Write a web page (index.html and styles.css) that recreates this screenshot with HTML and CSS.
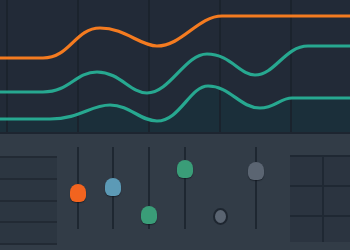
FILE: index.html
```html
<!DOCTYPE html>
<html>
<head>
<meta charset="utf-8">
<link rel="stylesheet" href="styles.css">
</head>
<body>
<div class="app">
  <div class="chart">
    <svg width="350" height="132" viewBox="0 0 350 132">
      <path class="fill" d="M0 119 L50 119 C80 119 90 105 110 105 C130 105 140 121 157 121 C180 121 190 86 208 86 C230 86 240 108 260 108 C275 108 280 98 292 98 L350 98 L350 132 L0 132 Z"/>
      <g class="grid">
        <rect x="6" y="0" width="2" height="132"/>
        <rect x="77" y="0" width="2" height="132"/>
        <rect x="148" y="0" width="2" height="132"/>
        <rect x="219" y="0" width="2" height="132"/>
        <rect x="290" y="0" width="2" height="132"/>
      </g>
      <path class="line orange" d="M0 58 L43 58 C70 58 75 28 100 28 C125 28 140 46 157 46 C182 46 198 16 222 16 L350 16"/>
      <path class="line teal" d="M0 92 L43 92 C70 92 75 72 97 72 C120 72 130 93 147 93 C170 93 185 54 207 54 C230 54 240 75 255 75 C275 75 285 46 308 46 L350 46"/>
      <path class="line teal" d="M0 119 L50 119 C80 119 90 105 110 105 C130 105 140 121 157 121 C180 121 190 86 208 86 C230 86 240 108 260 108 C275 108 280 98 292 98 L350 98"/>
    </svg>
  </div>
  <div class="mixer">
    <div class="rows">
      <div class="row"></div>
      <div class="row"></div>
      <div class="row"></div>
      <div class="row"></div>
    </div>
    <div class="faders">
      <div class="fader"><div class="track"></div><div class="knob orange-k" style="top:37px"></div></div>
      <div class="fader"><div class="track"></div><div class="knob blue-k" style="top:31px"></div></div>
      <div class="fader"><div class="track"></div><div class="knob green-k" style="top:59px"></div></div>
      <div class="fader"><div class="track"></div><div class="knob green-k" style="top:13px"></div></div>
      <div class="fader"><div class="dot" style="top:61px"></div></div>
      <div class="fader"><div class="track"></div><div class="knob gray-k" style="top:15px"></div></div>
    </div>
    <div class="pads">
      <div class="pad"></div><div class="pad"></div>
      <div class="pad"></div><div class="pad"></div>
      <div class="pad"></div><div class="pad"></div>
    </div>
  </div>
</div>
</body>
</html>
```
FILE: styles.css
```css
html, body {
  margin: 0;
  padding: 0;
  width: 350px;
  height: 250px;
  overflow: hidden;
  background: #323c47;
  font-family: "Liberation Sans", sans-serif;
}
.app {
  width: 350px;
  height: 250px;
  display: flex;
  flex-direction: column;
}
.chart {
  height: 132px;
  background: #222a37;
  border-bottom: 2px solid #1d2530;
}
.chart svg {
  display: block;
}
.fill {
  fill: #1b2f3a;
}
.grid rect {
  fill: #1b222c;
  opacity: 0.9;
}
.line {
  fill: none;
  stroke-width: 3.2;
  stroke-linecap: round;
}
.orange { stroke: #f47b20; }
.teal { stroke: #27a890; }

.mixer {
  flex: 1;
  display: flex;
  background: #323c47;
}
.rows {
  width: 57px;
  margin-top: 22px;
  height: 87px;
  background: #2c3641;
  display: flex;
  flex-direction: column;
  border-bottom: 2px solid #222a34;
}
.row {
  flex: 1;
  border-top: 2px solid #222a34;
}
.faders {
  margin-left: 3px;
  display: grid;
  grid-template-columns: repeat(6, 35.6px);
  padding-top: 13px;
  height: 82px;
}
.fader {
  position: relative;
  height: 82px;
}
.track {
  width: 2px;
  height: 82px;
  margin: 0 auto;
  background: #1e2731;
}
.knob {
  position: absolute;
  left: 50%;
  width: 16px;
  height: 18px;
  margin-left: -8px;
  border-radius: 8px 8px 6px 6px;
  box-shadow: 0 1px 1px rgba(15, 20, 28, 0.55);
}
.orange-k { background: #f2641f; }
.blue-k { background: #5c9ab6; }
.green-k { background: #3a9d78; }
.gray-k { background: #5b6572; }
.dot {
  position: absolute;
  left: 50%;
  width: 11px;
  height: 13px;
  margin-left: -7.5px;
  border-radius: 50%;
  background: #5a6471;
  border: 2px solid #1e2630;
}
.pads {
  margin-left: auto;
  margin-top: 21px;
  width: 60px;
  height: 87px;
  display: grid;
  grid-template-columns: 32px 1fr;
  grid-template-rows: 28px 28px 25px;
  gap: 2px;
  padding-top: 2px;
  box-sizing: border-box;
  background: #1f2833;
}
.pad {
  background: #2b3440;
}
```
